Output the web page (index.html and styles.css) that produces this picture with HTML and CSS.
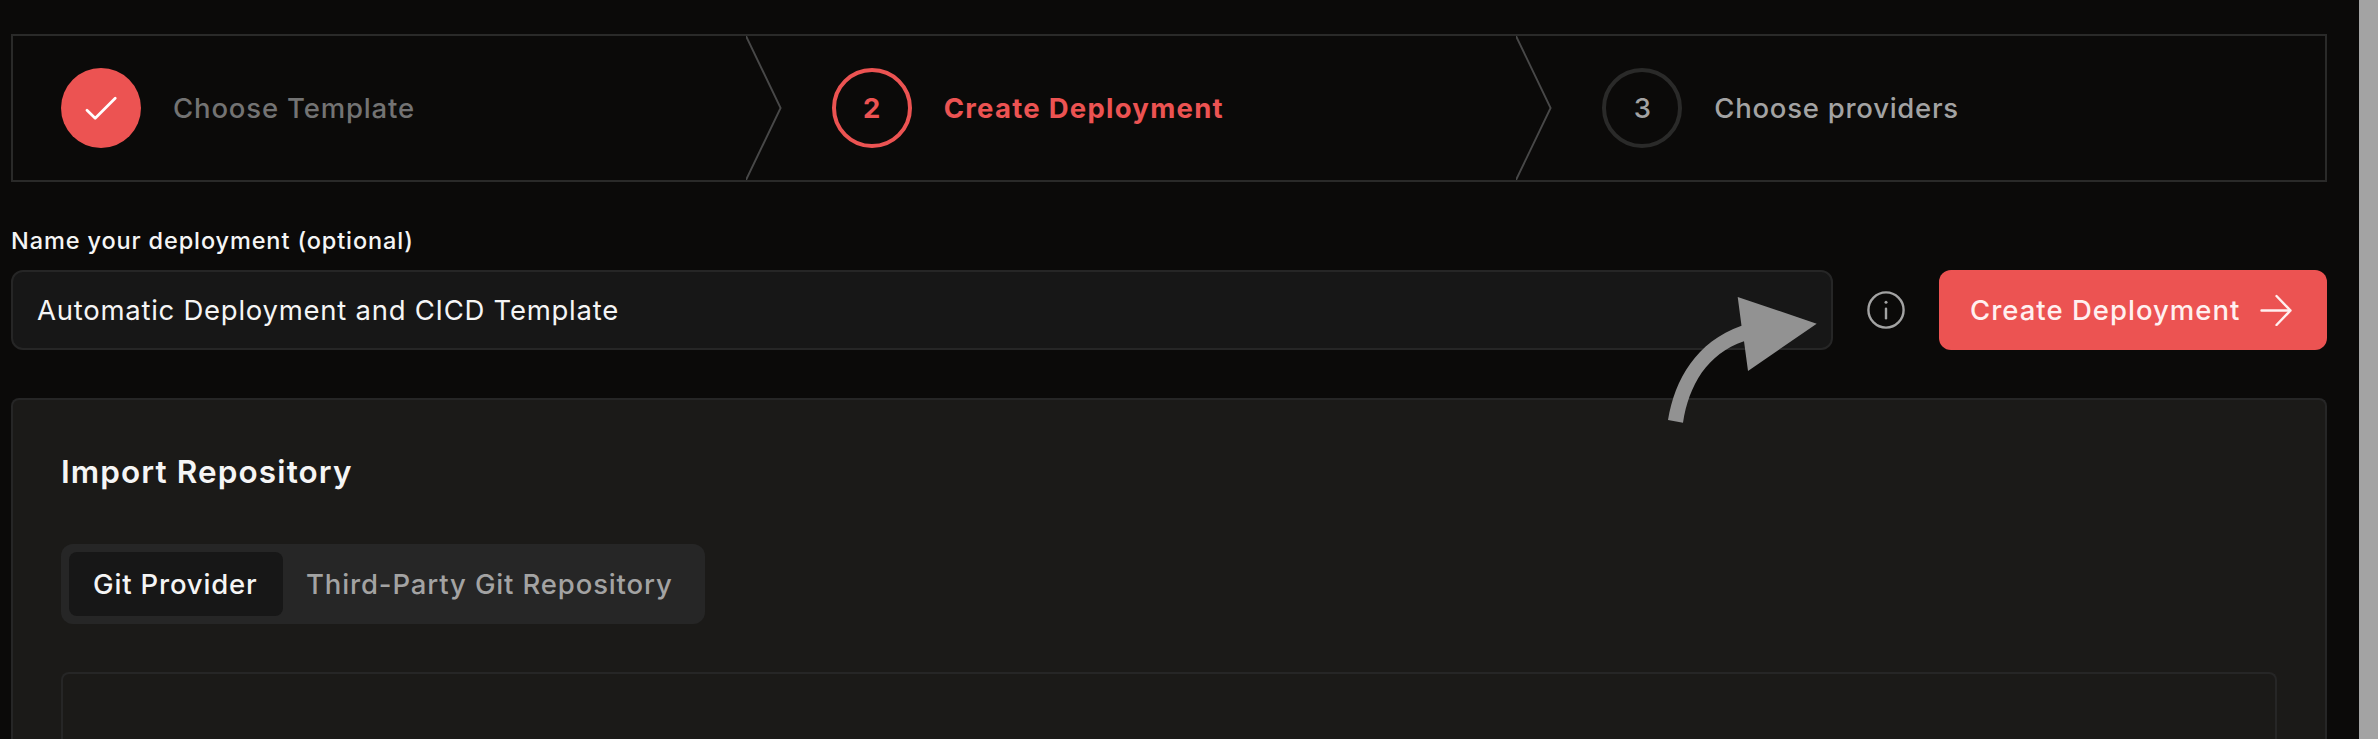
FILE: index.html
```
<!DOCTYPE html>
<html lang="en">
<head>
<meta charset="utf-8">
<title>Create Deployment</title>
<link rel="stylesheet" href="styles.css">
</head>
<body>
<main class="page">
  <ol class="stepper">
    <li class="step step-done">
      <span class="step-badge">
        <svg width="32" height="24" viewBox="0 0 32 24" fill="none" stroke="#fff" stroke-width="2.7" stroke-linecap="round" stroke-linejoin="round"><path d="M2 14.2 10.2 22.3 30.2 2.2"/></svg>
      </span>
      <span class="step-label">Choose Template</span>
      <svg class="step-divider" width="36" height="144" viewBox="0 0 36 144" fill="none" stroke="#484848" stroke-width="1.9"><path d="M0 0 34.6 72 0 144"/></svg>
    </li>
    <li class="step step-current">
      <span class="step-badge">2</span>
      <span class="step-label">Create Deployment</span>
      <svg class="step-divider" width="36" height="144" viewBox="0 0 36 144" fill="none" stroke="#484848" stroke-width="1.9"><path d="M0 0 34.6 72 0 144"/></svg>
    </li>
    <li class="step step-next">
      <span class="step-badge">3</span>
      <span class="step-label">Choose providers</span>
    </li>
  </ol>

  <div class="name-label">Name your deployment (optional)</div>
  <div class="name-row">
    <div class="name-input">Automatic Deployment and CICD Template</div>
    <svg class="info" width="38" height="38" viewBox="0 0 38 38" fill="none" stroke="#a3a3a3" stroke-width="2.4" stroke-linecap="round"><circle cx="19" cy="19" r="17.6"/><path d="M19 17.7v9.6"/><circle cx="19" cy="11.2" r="1.5" fill="#a3a3a3" stroke="none"/></svg>
    <button class="create">
      <span class="create-text">Create Deployment</span>
      <svg width="32" height="32" viewBox="0 0 32 32" fill="none" stroke="#fff0f0" stroke-width="2.4" stroke-linecap="round" stroke-linejoin="round"><path d="M1.500 16.500h29M16.500 2l14 14.500L16.500 31"/></svg>
    </button>
  </div>

  <section class="card">
    <h2 class="card-title">Import Repository</h2>
    <div class="tabs">
      <span class="tab tab-active">Git Provider</span>
      <span class="tab tab-other">Third-Party Git Repository</span>
    </div>
    <div class="panel"></div>
  </section>
</main>
<div class="scrollbar"></div>
<svg class="pointer" width="152" height="128" viewBox="0 0 152 128"><path fill="#929292" d="M3 123C10 82 31 45 76.500 28.700L72.700 0 151.700 26.700 83 74 79 44.300C42 57 24 88 18 125.700Z"/></svg>
</body>
</html>
```
FILE: styles.css
```
* { box-sizing: border-box; }

body {
  margin: 0;
  width: 2378px;
  height: 739px;
  overflow: hidden;
  display: flex;
  background: #0b0a09;
  color: #f5f5f5;
  font-family: Inter, "Liberation Sans", sans-serif;
  font-size: 27.5px;
  font-weight: 500;
}

.page {
  flex: 1;
  display: flex;
  flex-direction: column;
  padding: 34px 32px 0 11px;
}

.scrollbar {
  width: 19px;
  background: #a3a3a3;
}

.stepper {
  display: grid;
  grid-template-columns: repeat(3, 1fr);
  height: 148px;
  margin: 0;
  padding: 0;
  list-style: none;
  border: 2px solid #2a2a29;
}

.step {
  position: relative;
  display: flex;
  align-items: center;
  gap: 32px;
  padding-left: 48px;
}

.step-badge {
  display: flex;
  align-items: center;
  justify-content: center;
  width: 80px;
  height: 80px;
  border-radius: 50%;
}

.step-divider {
  position: absolute;
  top: 0;
  right: 2px;
}

.step-done { color: #737373; letter-spacing: .84px; }
.step-done .step-badge { background: #ec5352; }

.step-current { color: #ec5352; font-weight: 700; letter-spacing: 1.26px; }
.step-current .step-badge { border: 4px solid #ec5352; letter-spacing: 0; }

.step-next { color: #a3a3a3; letter-spacing: .74px; }
.step-next .step-badge { border: 4px solid #2a2a29; letter-spacing: 0; }

.name-label {
  margin-top: 43px;
  line-height: 32px;
  font-size: 23.5px;
  letter-spacing: .88px;
}

.name-row {
  display: flex;
  align-items: center;
  margin-top: 13px;
}

.name-input {
  flex: 1;
  height: 80px;
  padding-left: 24px;
  border: 2px solid #262626;
  border-radius: 12px;
  background: #171717;
  font-weight: 400;
  letter-spacing: .74px;
  line-height: 76px;
}

.info { margin: 0 34px; }

.create {
  display: flex;
  align-items: center;
  justify-content: space-between;
  width: 388px;
  height: 80px;
  padding: 0 35px 0 31px;
  border: 0;
  border-radius: 12px;
  background: #ec5352;
  color: #fff0f0;
  font: inherit;
  letter-spacing: 1.01px;
}

.card {
  flex: 1;
  display: flex;
  flex-direction: column;
  margin-top: 48px;
  padding: 48px 48px 0;
  border: 2px solid #262626;
  border-bottom: 0;
  border-radius: 8px 8px 0 0;
  background: #1b1a18;
}

.card-title {
  margin: 0;
  line-height: 48px;
  font-size: 31.5px;
  font-weight: 600;
  letter-spacing: 1.11px;
}

.tabs {
  display: flex;
  width: 644px;
  height: 80px;
  margin-top: 48px;
  padding: 8px;
  border-radius: 12px;
  background: #262626;
  line-height: 64px;
}

.tab { padding-left: 24px; }

.tab-active {
  width: 214px;
  border-radius: 8px;
  background: #171717;
  letter-spacing: .83px;
}

.tab-other {
  padding-left: 23px;
  color: #a3a3a3;
  letter-spacing: .86px;
  white-space: nowrap;
}

.panel {
  flex: 1;
  margin-top: 48px;
  border: 2px solid #262626;
  border-bottom: 0;
  border-radius: 8px 8px 0 0;
}

/* Annotation arrow that lies over the form */
.pointer {
  position: absolute;
  left: 1665px;
  top: 297px;
}
```
